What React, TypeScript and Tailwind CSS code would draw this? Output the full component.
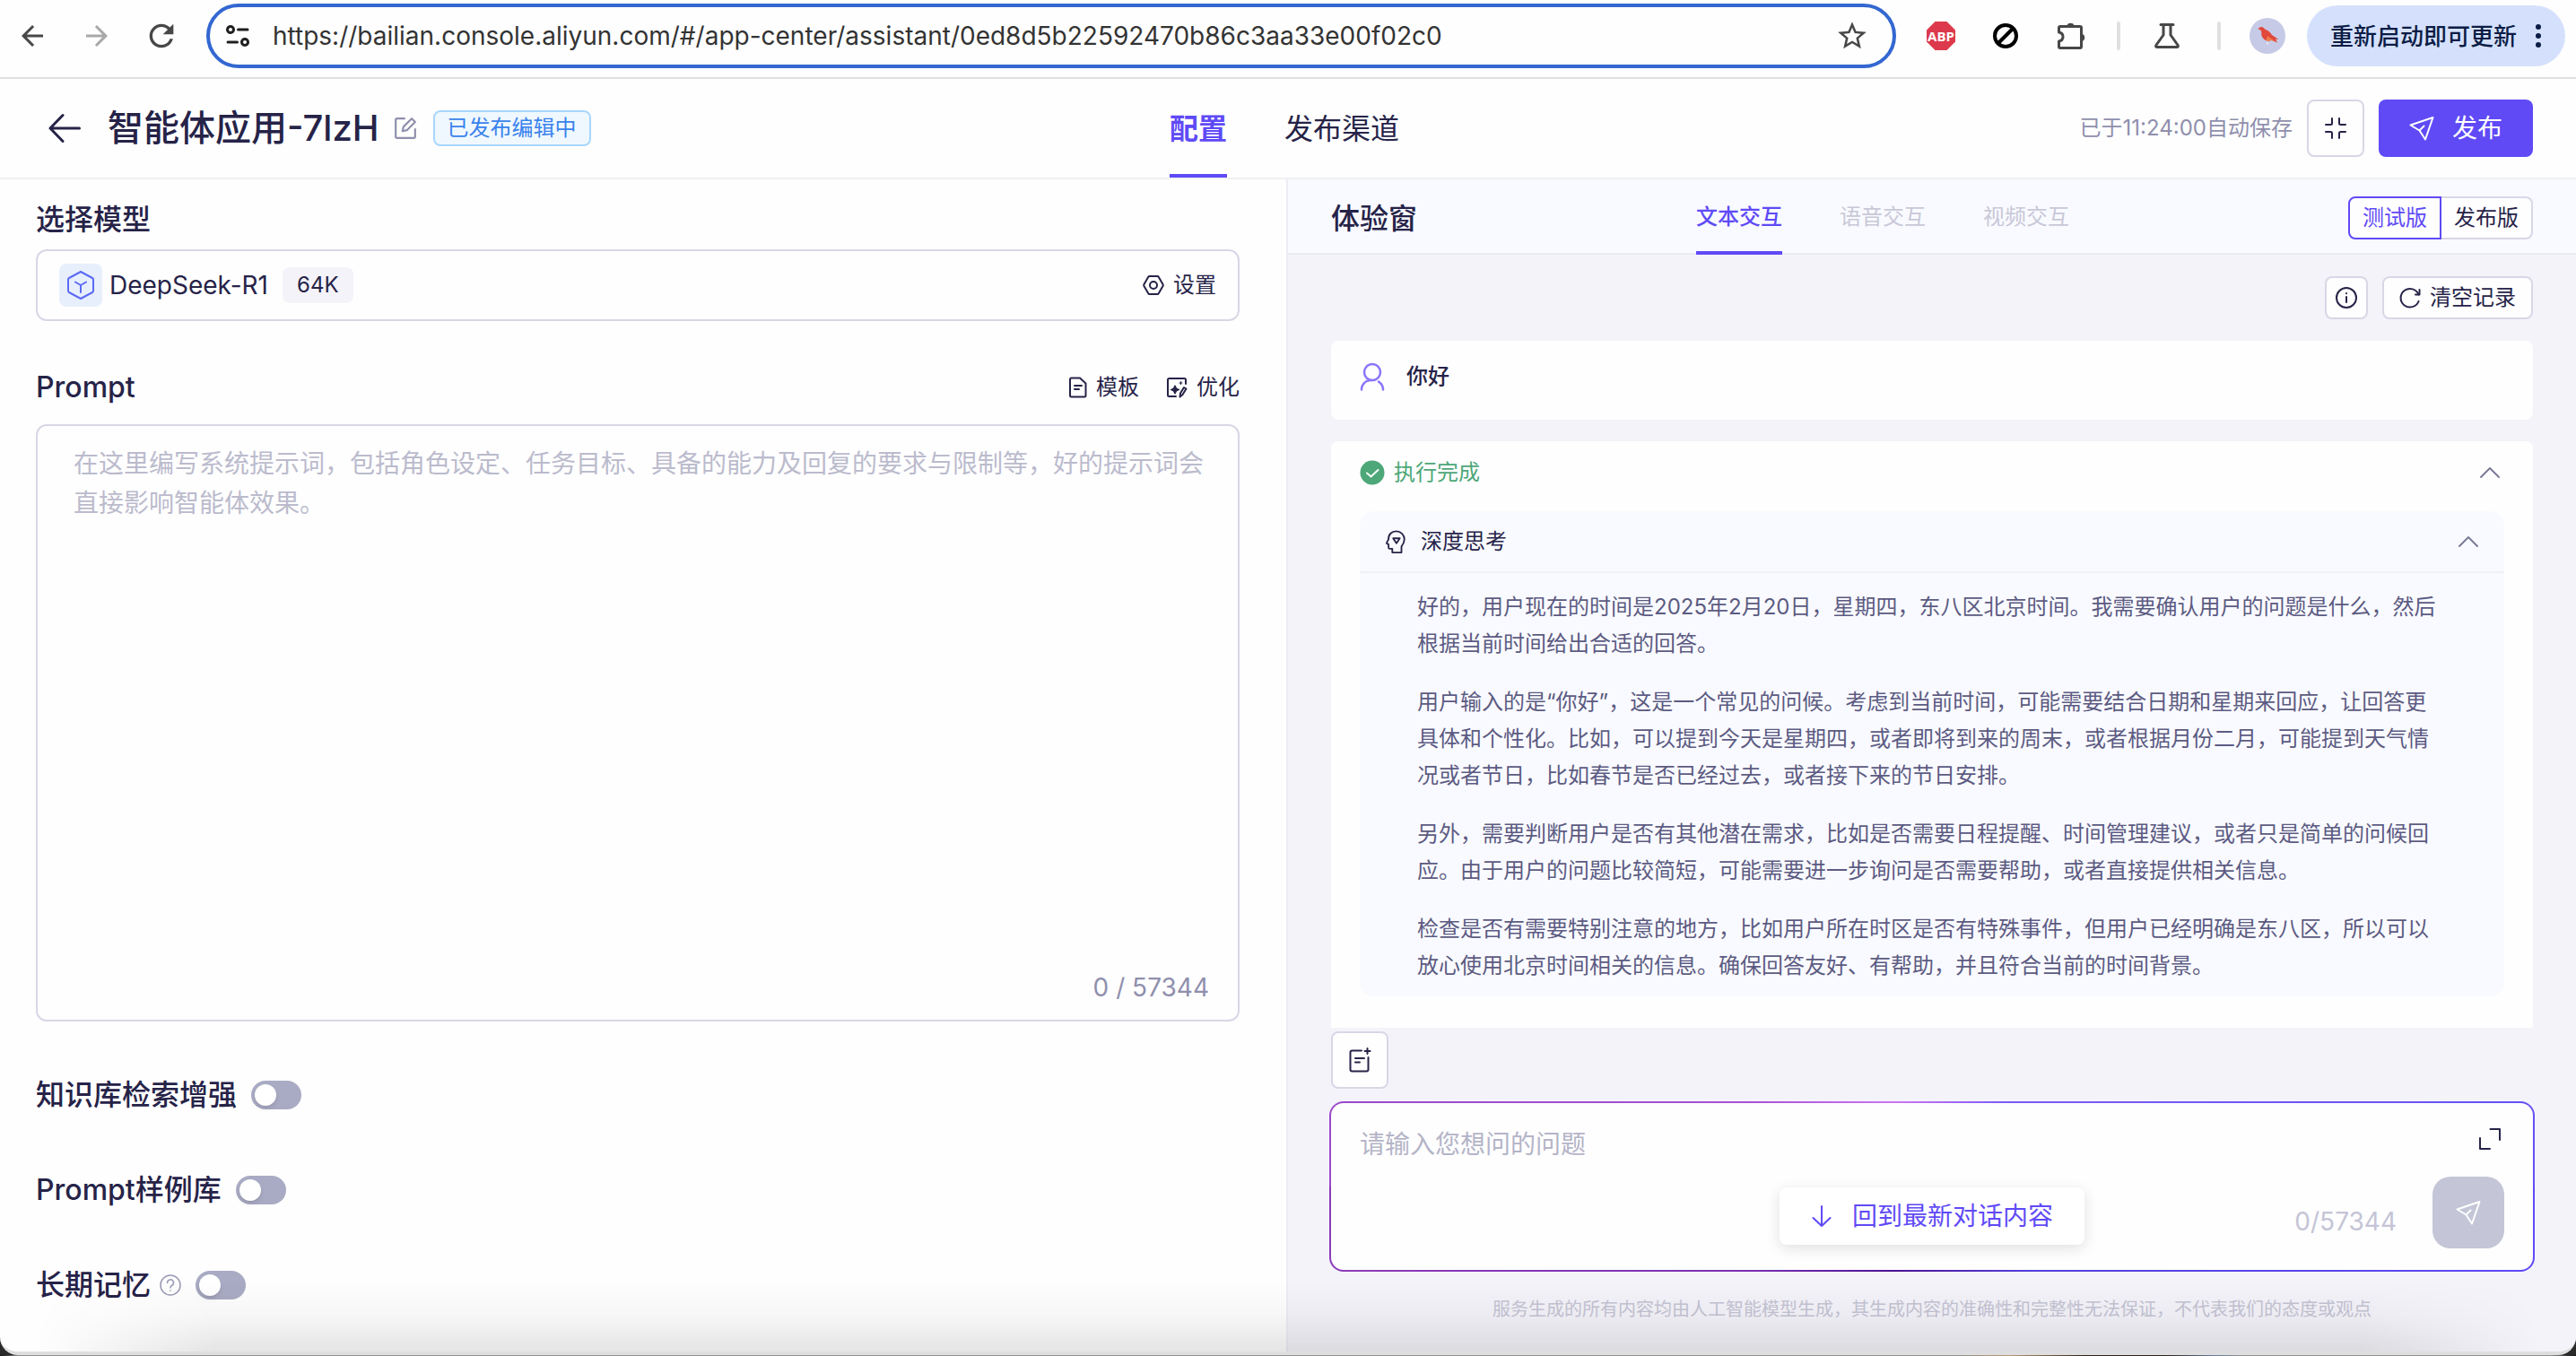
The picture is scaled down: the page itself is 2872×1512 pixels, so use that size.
import * as React from 'react';
import cn from 'clsx';
import { MdArrowBack, MdArrowForward, MdRefresh, MdStarBorder } from 'react-icons/md';

const THOUGHTS = [
  '好的，用户现在的时间是2025年2月20日，星期四，东八区北京时间。我需要确认用户的问题是什么，然后根据当前时间给出合适的回答。',
  '用户输入的是“你好”，这是一个常见的问候。考虑到当前时间，可能需要结合日期和星期来回应，让回答更具体和个性化。比如，可以提到今天是星期四，或者即将到来的周末，或者根据月份二月，可能提到天气情况或者节日，比如春节是否已经过去，或者接下来的节日安排。',
  '另外，需要判断用户是否有其他潜在需求，比如是否需要日程提醒、时间管理建议，或者只是简单的问候回应。由于用户的问题比较简短，可能需要进一步询问是否需要帮助，或者直接提供相关信息。',
  '检查是否有需要特别注意的地方，比如用户所在时区是否有特殊事件，但用户已经明确是东八区，所以可以放心使用北京时间相关的信息。确保回答友好、有帮助，并且符合当前的时间背景。',
];

const MODES = ['文本交互', '语音交互', '视频交互'];

type IconProps = {
  className?: string;
  viewBox?: string;
  width?: number;
  children: React.ReactNode;
};

const Icon: React.FC<IconProps> = ({ className, viewBox = '0 0 24 24', width = 2, children }) => (
  <svg
    className={cn('shrink-0', className)}
    viewBox={viewBox}
    fill="none"
    stroke="currentColor"
    strokeWidth={width}
    strokeLinecap="round"
    strokeLinejoin="round"
    aria-hidden="true"
  >
    {children}
  </svg>
);

const PlaneIcon: React.FC<{ className?: string }> = ({ className }) => (
  <Icon className={className} viewBox="0 0 28 28">
    <path d="M1.5 10.5 26.5 2 18 26.5l-6.5-10z" />
    <path d="m11.5 16.5 5-5" />
  </Icon>
);

const ChevronUp = () => (
  <Icon className="h-6 w-6 text-[#7b7b98]">
    <path d="m2 17 10-10 10 10" />
  </Icon>
);

const BrowserBar = () => (
  <div className="flex h-22 items-center border-b-2 border-[#e0e0e0] bg-[#fefefe] pr-3 pb-1.5 pl-[18px] text-[#474747]">
    <button aria-label="后退" className="mr-9">
      <MdArrowBack size={36} />
    </button>
    <button aria-label="前进" className="mr-[34px] text-[#a8a8a8]">
      <MdArrowForward size={36} />
    </button>
    <button aria-label="刷新" className="mr-[30px]">
      <MdRefresh size={40} />
    </button>
    <div className="flex h-[72px] flex-1 items-center rounded-full border-4 border-[#3367d1] pr-[26px] pl-[18px]">
      <Icon className="mr-[26px] h-6 w-[26px] text-[#1f1f1f]" viewBox="0 0 26 24" width={3}>
        <circle cx="5" cy="5" r="3.5" />
        <path d="M13.5 5H24M2 19h10.500" />
        <circle cx="21" cy="19" r="3.5" />
      </Icon>
      <input
        aria-label="地址"
        defaultValue="https://bailian.console.aliyun.com/#/app-center/assistant/0ed8d5b22592470b86c3aa33e00f02c0"
        className="min-w-0 flex-1 text-[28px] text-[#333333] outline-none"
      />
      <button aria-label="收藏">
        <MdStarBorder size={38} />
      </button>
    </div>
    <div className="flex items-center pl-[34px]">
      <svg className="h-8 w-8" viewBox="0 0 32 32" aria-hidden="true">
        <path d="M9.500 0h13L32 9.500v13L22.500 32h-13L0 22.500v-13z" fill="#dc3a4c" />
        <text x="16" y="21.500" textAnchor="middle" fontSize="15" fontWeight="700" fill="#fff" fontFamily="Open Sans, sans-serif">
          ABP
        </text>
      </svg>
      <Icon className="ml-[42px] h-7 w-7 text-black" viewBox="0 0 28 28" width={4}>
        <circle cx="14" cy="14" r="12" />
        <path d="m6 22 16-16" />
      </Icon>
      <Icon className="ml-11 h-8 w-8" viewBox="0 0 32 32" width={3}>
        <path d="M3 5.500h22q1.500 0 1.500 1.500v21q0 1.500-1.500 1.500H3q-1.500 0-1.500-1.500v-6c6-1 6-9 0-10V7q0-1.500 1.500-1.500z" />
        <path d="M11 4.500a4 4 0 0 1 7 0zM27.500 14.500a4 4 0 0 1 0 7z" fill="currentColor" strokeWidth="1.500" />
      </Icon>
      <span className="ml-[34px] h-8 w-1 rounded bg-[#e0e0e0]" />
      <Icon className="ml-[38px] h-7 w-7" viewBox="0 0 28 28" width={3}>
        <path d="M7 1.500h14M10 2v11L1.800 24.500q-.6 2 1.200 2h22q1.800 0 1.200-2L18 13V2" />
      </Icon>
      <span className="ml-[42px] h-8 w-1 rounded bg-[#e0e0e0]" />
      <svg className="ml-8 h-10 w-10" viewBox="0 0 40 40" aria-hidden="true">
        <circle cx="20" cy="20" r="20" fill="#c7cae6" />
        <path d="M9.500 12.500c1.500-3.500 6-3.500 7.500 0 3 1 6 3 8 6.500l7.500 5-3.500-.5 2 4-7-3c-4 2-8 .5-10-3.500-1.500-3 .5-6-2.500-8z" fill="#e2483d" />
        <path d="M20 20l9 6.500-5-1.500c-2 1.500-4 1-5.500 0z" fill="#f07d4a" />
        <path d="M20 27v2.500" stroke="#fff" />
      </svg>
    </div>
    <button className="ml-6 flex h-[68px] items-center rounded-full bg-[#d5e1fc] px-[26px] text-[26px] font-medium text-[#0b1c45]">
      重新启动即可更新
      <svg className="ml-5 h-7 w-2" viewBox="0 0 8 28" fill="currentColor" aria-hidden="true">
        <circle cx="4" cy="4" r="3" />
        <circle cx="4" cy="14" r="3" />
        <circle cx="4" cy="24" r="3" />
      </svg>
    </button>
  </div>
);

const Header = () => (
  <header className="grid h-28 grid-cols-[1fr_auto_1fr] items-center border-b-2 border-[#f0f0f3] pr-12 pl-10">
    <div className="flex items-center">
      <button aria-label="返回" className="mr-[30px] ml-3.5">
        <Icon className="h-9 w-9" viewBox="0 0 36 36" width={3}>
          <path d="M34.500 18H2M16 3.500 2 18l14 14.500" />
        </Icon>
      </button>
      <h1 className="text-[40px] leading-none font-medium">智能体应用-7lzH</h1>
      <button aria-label="重命名" className="ml-4 text-[#8f8fad]">
        <Icon className="h-[26px] w-[26px]">
          <path d="M11 2H3.500Q2 2 2 3.500v17Q2 22 3.500 22h17q1.500 0 1.500-1.500V13" />
          <path d="m9 15 1-4.500L18.500 2 22 5.500 13.500 14z" />
        </Icon>
      </button>
      <span className="ml-[18px] rounded-lg border-2 border-[#a8d6fc] bg-[#eff8ff] px-3.5 text-2xl leading-9 text-[#3a83ec]">
        已发布编辑中
      </span>
    </div>
    <nav className="flex h-full gap-16 text-[32px]">
      <button className="border-b-4 border-[#5f4af6] pt-1.5 font-bold text-[#5f4af6]">配置</button>
      <button className="border-b-4 border-transparent pt-1.5">发布渠道</button>
    </nav>
    <div className="flex items-center justify-end">
      <span className="text-2xl text-[#8f8fad]">已于11:24:00自动保存</span>
      <button aria-label="收起" className="ml-4 flex h-16 w-16 items-center justify-center rounded-lg border-2 border-[#d8d7e6]">
        <Icon className="h-6 w-6">
          <path d="M8 1v5.500Q8 8 6.500 8H1M16 1v5.500Q16 8 17.500 8H23M8 23v-5.500Q8 16 6.500 16H1M16 23v-5.500q0-1.500 1.500-1.500H23" />
        </Icon>
      </button>
      <button className="ml-4 flex h-16 w-[172px] items-center justify-center gap-5 rounded-lg bg-[#5f4af6] text-[28px] text-white">
        <PlaneIcon className="h-7 w-7" />
        发布
      </button>
    </div>
  </header>
);

const ModelCard = () => (
  <div className="mt-2 flex h-20 items-center rounded-xl border-2 border-[#d8d7e6] px-6">
    <span className="flex h-12 w-12 items-center justify-center rounded-lg bg-[#e7effd] text-[#5b6af5]">
      <Icon className="h-8 w-8" viewBox="0 0 32 32" width={2}>
        <path d="M16 1 29 8q1 .5 1 2v12q0 1.500-1 2l-13 7-13-7q-1-.5-1-2V10q0-1.500 1-2zM16 24v-8M10 12.500l6 3.500 6-3.500" />
      </Icon>
    </span>
    <span className="ml-2 text-[28px]">DeepSeek-R1</span>
    <span className="ml-4 rounded-lg bg-[#f4f3f9] px-4 text-2xl leading-10">64K</span>
    <button className="ml-auto flex items-center gap-2.5 text-2xl">
      <Icon className="h-6 w-6">
        <path d="M7.500 2h9q.8 0 1.200.7l4.800 8.300q.5 1 0 2l-4.800 8.300q-.4.700-1.200.700h-9q-.8 0-1.200-.7L1.500 13q-.5-1 0-2l4.800-8.300Q6.700 2 7.500 2z" />
        <circle cx="12" cy="12" r="4" />
      </Icon>
      设置
    </button>
  </div>
);

const SwitchRow: React.FC<{ id: string; label: string; help?: boolean }> = ({ id, label, help }) => (
  <div className="flex h-12 items-center">
    <label htmlFor={id} className="text-[32px] font-medium">
      {label}
    </label>
    {help && (
      <Icon className="ml-2.5 h-6 w-6 text-[#9a9ab5]" width={1.5}>
        <circle cx="12" cy="12" r="11" />
        <path d="M8.500 9.500a3.500 3.500 0 1 1 5 3q-1.500.8-1.500 2.500M12 18v.3" />
      </Icon>
    )}
    <input
      id={id}
      type="checkbox"
      role="switch"
      className="ml-4 h-8 w-14 appearance-none rounded-full bg-[#a9abc4] p-1 before:block before:h-6 before:w-6 before:rounded-full before:bg-white before:shadow-md checked:bg-[#5f4af6] checked:before:translate-x-6"
    />
  </div>
);

const ConfigPanel = () => (
  <section className="border-r-2 border-[#ececf3] pt-5 pr-[52px] pb-10 pl-10">
    <h2 className="text-[32px] leading-[50px] font-medium">选择模型</h2>
    <ModelCard />
    <div className="mt-[50px] flex h-12 items-center text-2xl">
      <label htmlFor="prompt" className="mr-auto text-[32px] font-medium">
        Prompt
      </label>
      <button className="flex items-center gap-2">
        <Icon className="h-6 w-6" width={2}>
          <path d="M4.500 1.500h9.500l6.500 6V21q0 1.500-1.500 1.500H4.500Q3 22.500 3 21V3q0-1.500 1.500-1.500zM8 10h8M8 14h5" />
        </Icon>
        模板
      </button>
      <button className="ml-[30px] flex items-center gap-2.5">
        <Icon className="h-6 w-6">
          <path d="M11 22H3.500Q2 22 2 20.500v-17Q2 2 3.500 2h17Q22 2 22 3.500V8M15.500 22.500l.5-4 4-6.500 2.500 1.500-4 6.500z" />
          <path d="m10 10 1.500 3 3 1.500-3 1.500-1.500 3-1.500-3-3-1.500 3-1.500zM16.500 5.500v3M15 7h3" fill="currentColor" strokeWidth="1.200" />
        </Icon>
        优化
      </button>
    </div>
    <div className="mt-[17px] flex h-[666px] flex-col rounded-xl border-2 border-[#d8d7e6] pb-4">
      <textarea
        id="prompt"
        placeholder="在这里编写系统提示词，包括角色设定、任务目标、具备的能力及回复的要求与限制等，好的提示词会直接影响智能体效果。"
        className="flex-1 resize-none pt-5 pr-8 pl-10 text-[28px] leading-11 outline-none placeholder:text-[#bbbbcd]"
      />
      <span className="mr-8 self-end text-[28px] leading-10 text-[#8f8fad]">0 / 57344</span>
    </div>
    <div className="mt-[58px] flex flex-col gap-[58px]">
      <SwitchRow id="kb" label="知识库检索增强" />
      <SwitchRow id="samples" label="Prompt样例库" />
      <SwitchRow id="memory" label="长期记忆" help />
    </div>
  </section>
);

const Composer = () => (
  <div className="relative -mx-0.5 mt-[14px] h-[190px] rounded-2xl bg-[linear-gradient(90deg,#9a48cc,#a850d6_35%,#cc76f2_47%,#7c5af6_56%,#6450f6),linear-gradient(90deg,#8c3cba,#7a30b4_35%,#4c1294_47%,#5440dc_58%,#5f4af6)] bg-[length:100%_50%] bg-[position:top,bottom] bg-no-repeat p-0.5">
    <div className="flex h-full rounded-[14px] bg-[#fefefe] pr-8">
      <textarea
        aria-label="问题"
        placeholder="请输入您想问的问题"
        className="flex-1 resize-none pt-6 pl-8 text-[28px] leading-11 outline-none placeholder:text-[#b4b4c8]"
      />
      <span className="mr-10 self-end pb-[34px] text-[28px] leading-10 text-[#c4c4d6]">0/57344</span>
      <div className="flex flex-col items-end justify-between pt-7 pb-6">
        <button aria-label="放大" className="mr-1">
          <Icon className="h-6 w-6">
            <path d="M12.500 1H23v12M1 11v12h11" />
          </Icon>
        </button>
        <button aria-label="发送" className="flex h-20 w-20 items-center justify-center rounded-[20px] bg-[#c4c5d6] text-white">
          <PlaneIcon className="h-7 w-7" />
        </button>
      </div>
    </div>
    <button className="absolute bottom-[30px] left-1/2 flex h-16 w-[340px] -translate-x-1/2 items-center justify-center gap-[22px] rounded-lg bg-white text-[28px] text-[#5f4af6] shadow-[0_4px_16px_rgba(0,0,0,0.12)]">
      <Icon className="h-6 w-6">
        <path d="M12 1v22M2.500 14l9.500 9 9.500-9" />
      </Icon>
      回到最新对话内容
    </button>
  </div>
);

const PreviewPanel = () => (
  <section className="bg-[#f4f3f9]">
    <div className="flex h-[84px] justify-between border-b-2 border-[#ebebf1] bg-[#f9faff] px-12 pt-1">
      <h2 className="text-[32px] leading-[80px] font-medium">体验窗</h2>
      <div className="-mb-0.5 flex gap-16 text-2xl">
        {MODES.map((mode, i) => (
          <button
            key={mode}
            disabled={i > 0}
            className={cn(
              'border-b-4',
              i === 0 ? 'border-[#5f4af6] font-medium text-[#5f4af6]' : 'border-transparent text-[#c8c8d8]',
            )}
          >
            {mode}
          </button>
        ))}
      </div>
      <div className="flex items-center text-2xl">
        <button className="h-12 w-[104px] rounded-l-lg border-2 border-[#5f4af6] bg-[#fefefe] text-[#5f4af6]">测试版</button>
        <button className="h-12 w-[102px] rounded-r-lg border-2 border-l-0 border-[#d8d7e6] bg-[#fefefe]">发布版</button>
      </div>
    </div>
    <div className="px-12 pt-6">
      <div className="flex justify-end gap-4 text-2xl">
        <button aria-label="说明" className="flex h-12 w-12 items-center justify-center rounded-lg border-2 border-[#d8d7e6] bg-[#fefefe]">
          <Icon className="h-6 w-6">
            <circle cx="12" cy="12" r="11" />
            <path d="M12 11v6M12 7v.3" />
          </Icon>
        </button>
        <button className="flex h-12 w-[168px] items-center justify-center gap-2.5 rounded-lg border-2 border-[#d8d7e6] bg-[#fefefe]">
          <Icon className="h-6 w-6">
            <path d="M21.500 8.500A10.300 10.300 0 1 0 21.500 16" />
            <path d="M22.500 3v5.500H18" />
          </Icon>
          清空记录
        </button>
      </div>

      <div className="mt-6 flex h-22 items-center rounded-lg bg-[#fefefe] px-8 pb-2">
        <Icon className="h-8 w-7 text-[#8a76fa]" viewBox="0 0 28 32" width={2.5}>
          <circle cx="14" cy="11" r="9" />
          <path d="M2 30.500C2 24 7 20 13 20M21 21.500q5 3.500 5 9" />
        </Icon>
        <span className="ml-6 text-2xl font-medium">你好</span>
      </div>

      <div className="mt-6 rounded-t-lg bg-[#fefefe] px-8 pb-[35px]">
        <div className="mb-2 flex h-[70px] items-center text-2xl text-[#4da778]">
          <svg className="mr-2.5 h-7 w-7" viewBox="0 0 28 28" aria-hidden="true">
            <circle cx="14" cy="14" r="13.500" fill="currentColor" />
            <path d="m8 14.500 4.500 4 8-7.500" fill="none" stroke="#fff" strokeWidth="2" strokeLinecap="round" />
          </svg>
          执行完成
          <button aria-label="收起执行过程" className="mr-1 ml-auto">
            <ChevronUp />
          </button>
        </div>
        <div className="rounded-2xl bg-[#f9faff]">
          <div className="flex h-[69px] items-center border-b-2 border-[#f0f0f6] px-7 text-2xl">
            <Icon className="mr-4 h-[26px] w-6" viewBox="0 0 24 28">
              <path d="M8 27v-4.500H5q-1.500 0-1.500-1.500v-4l-2-.8Q1 16 1.500 15l1.800-3.500C3.300 5 7.500 1.500 12.500 1.500c6 0 10 4.500 10 9.500 0 4-1.500 6-3.500 9v7z" />
              <path d="M9 10h8l-4 6z" />
            </Icon>
            深度思考
            <button aria-label="收起深度思考" className="ml-auto">
              <ChevronUp />
            </button>
          </div>
          <div className="flex flex-col gap-6 px-16 pt-[17px] pb-[14px] text-2xl leading-[41px] text-[#5c5b82]">
            {THOUGHTS.map(text => (
              <p key={text}>{text}</p>
            ))}
          </div>
        </div>
      </div>

      <button aria-label="新建对话" className="mt-1 flex h-16 w-16 items-center justify-center rounded-lg border-2 border-[#d8d7e6] bg-[#fefefe]">
        <Icon className="h-7 w-7" viewBox="0 0 28 28">
          <path d="M16 3.500H5.500Q3.500 3.500 3.500 5.500v19q0 2 2 2h16q2 0 2-2V11M9 12h10M9 16.500h5M22.500 1v6M19.500 4h6" />
        </Icon>
      </button>
      <Composer />
      <p className="mt-[27px] pb-8 text-center text-xl leading-[30px] text-[#c4c4d4]">
        服务生成的所有内容均由人工智能模型生成，其生成内容的准确性和完整性无法保证，不代表我们的态度或观点
      </p>
    </div>
  </section>
);

const App: React.FC = () => (
  <div className="flex min-h-screen flex-col bg-[#2a2a2a] font-['Inter','Noto_Sans_CJK_SC',sans-serif] text-[#262348]">
    <div className="relative flex flex-1 flex-col overflow-hidden rounded-b-[20px] border-b-4 border-[#dedee0] bg-[#fefefe]">
      <BrowserBar />
      <Header />
      <main className="grid flex-1 grid-cols-2">
        <ConfigPanel />
        <PreviewPanel />
      </main>
      {/* soft shade along the lower window edge */}
      <div className="pointer-events-none absolute inset-x-0 bottom-0 h-20 bg-linear-to-b from-transparent via-black/3 to-black/10 mask-[linear-gradient(to_right,transparent_40px,black_240px,black_calc(100%-240px),transparent_calc(100%-40px))]" />
    </div>
    <div className="h-1 bg-[linear-gradient(90deg,#111_0,#909090_20px,#909090_76%,#b59a70_78%,#2a211c_81%,#2a211c_84%,#6d7f99_86%,#909090_87%,#909090_99%,#111)]" />
  </div>
);

export default App;
